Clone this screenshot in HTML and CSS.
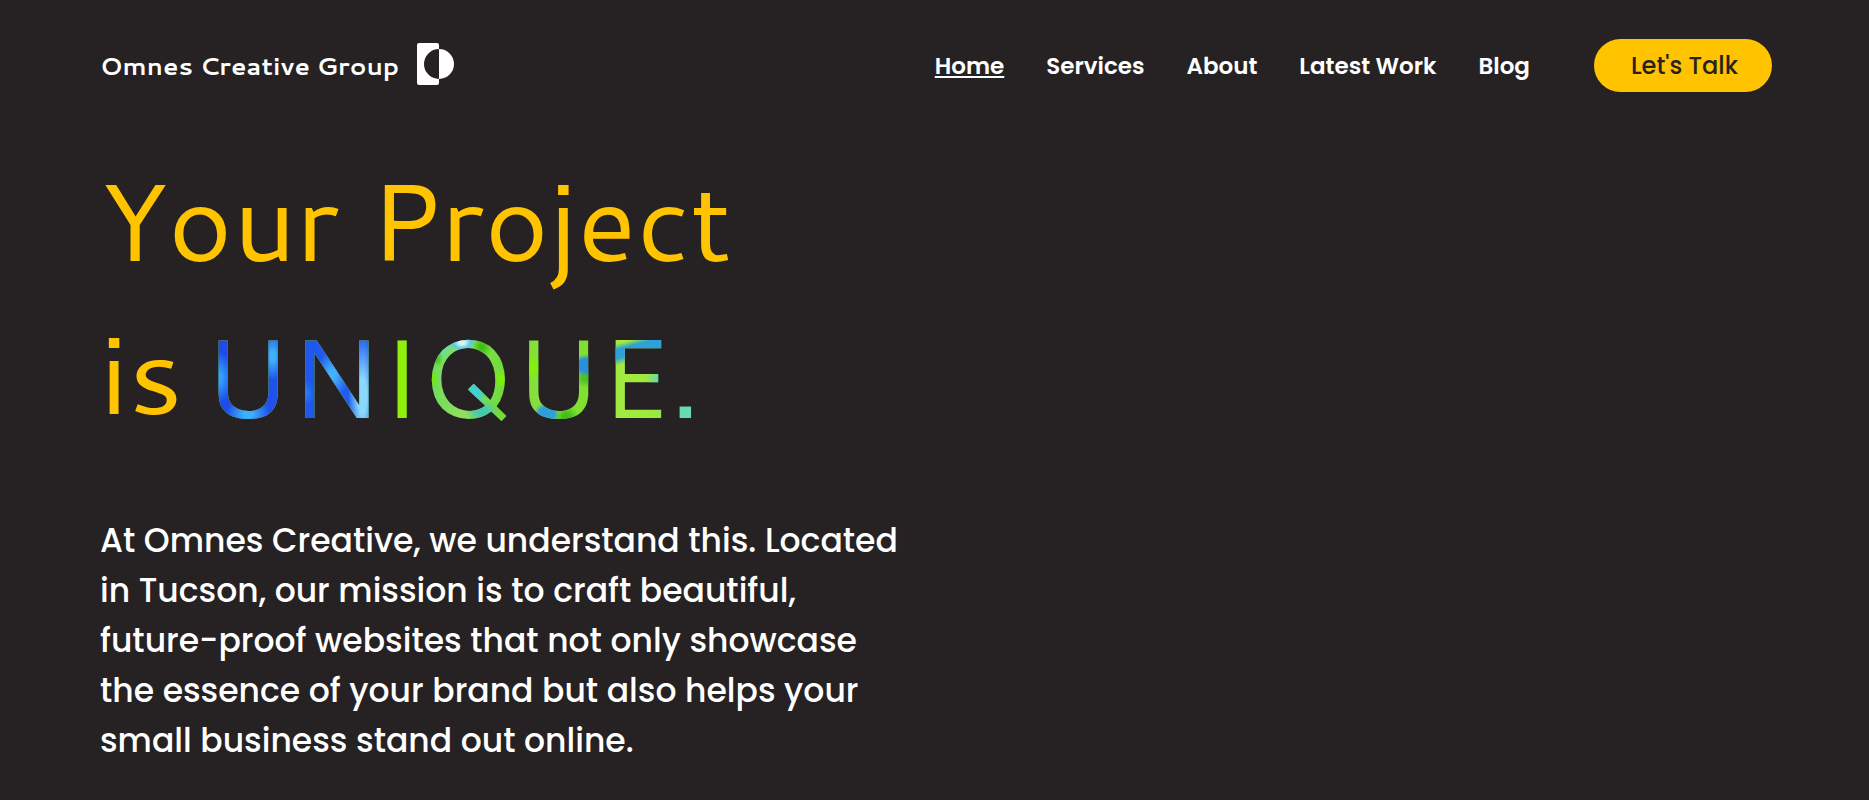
FILE: index.html
```html
<!DOCTYPE html>
<html lang="en">
  <head>
    <meta charset="UTF-8" />
    <meta name="viewport" content="width=device-width, initial-scale=1.0" />
    <title>Omnes Creative Group</title>
    <link rel="stylesheet" href="styles.css" />
  </head>
  <body>
    <header class="header">
      <a href="#" class="logo">
        <span>Omnes Creative Group</span>
        <svg class="logo-icon" viewBox="0 0 37 42" aria-hidden="true">
          <path fill="#fff" d="M2 0H20Q22 0 22 2V6A15 15 0 0 0 22 36V40Q22 42 20 42H2Q0 42 0 40V2Q0 0 2 0Z" />
          <path fill="#fff" d="M22 6A15 15 0 0 1 22 36Z" />
        </svg>
      </a>

      <nav class="nav">
        <a href="#" class="active">Home</a>
        <a href="#">Services</a>
        <a href="#">About</a>
        <a href="#">Latest Work</a>
        <a href="#">Blog</a>
        <button type="button" class="talk-btn">Let's Talk</button>
      </nav>
    </header>

    <main class="hero">
      <h1>
        <span class="line">Your Project</span>
        <span class="line">is <span class="unique">UNIQUE.</span></span>
      </h1>
      <p>
        At Omnes Creative, we understand this. Located<br />
        in Tucson, our mission is to craft beautiful,<br />
        future-proof websites that not only showcase<br />
        the essence of your brand but also helps your<br />
        small business stand out online.
      </p>
    </main>
  </body>
</html>
```
FILE: styles.css
```css
* {
  box-sizing: border-box;
  margin: 0;
  padding: 0;
}

body {
  background: #262223;
  color: #fff;
  font-family: "Poppins", "Inter", sans-serif;
}

/* Header */
.header {
  display: flex;
  justify-content: space-between;
  align-items: center;
  padding: 39px 97px 0 100px;
}

.logo {
  display: flex;
  align-items: flex-start;
  gap: 18px;
  color: #fff;
  font-family: "Cantarell", "Open Sans", sans-serif;
  font-size: 25px;
  font-weight: 700;
  line-height: 45px;
  text-decoration: none;
}

.logo-icon {
  width: 37px;
  height: 42px;
}

.nav {
  display: flex;
  align-items: center;
  gap: 42px;
}

.nav a {
  color: #fff;
  font-size: 23px;
  font-weight: 600;
  line-height: 34px;
  text-decoration: none;
}

.nav a.active {
  text-decoration: underline;
  text-decoration-thickness: 2px;
  text-underline-offset: 2px;
}

.talk-btn {
  margin-left: 22px;
  padding: 0 34px 0 37px;
  border: none;
  border-radius: 27px;
  background: #ffc300;
  color: #262223;
  font-family: inherit;
  font-size: 24px;
  font-weight: 500;
  line-height: 53px;
  cursor: pointer;
}

/* Hero */
.hero {
  padding: 50px 100px;
}

.hero h1 {
  color: #ffc300;
  font-family: "Cantarell", "Open Sans", sans-serif;
  font-size: 110px;
  font-weight: 400;
  line-height: 153px;
}

.line {
  display: flex;
  gap: 20px;
}

/* Painted texture showing through the letters */
.unique {
  margin-top: 3px;
  font-size: 112px;
  background:
    /* blue part */
    radial-gradient(ellipse 16px 26px at 3% 52%, #35a2f8 20%, transparent),
    radial-gradient(ellipse 22px 18px at 9% 76%, #3fb0fa 20%, transparent),
    radial-gradient(ellipse 12px 24px at 14% 38%, #3fb0fa 20%, transparent),
    radial-gradient(ellipse 12px 14px at 20% 62%, #2a8df5, transparent),
    radial-gradient(ellipse 16px 24px at 26% 50%, #45b0fa 20%, transparent),
    radial-gradient(ellipse 14px 60px at 32% 64%, #8ad8fb 30%, transparent),
    /* green part */
    radial-gradient(ellipse 14px 10px at 52% 29%, #d8f3f5 20%, #5cc8e8 60%, transparent),
    radial-gradient(ellipse 10px 12px at 56% 32%, #3fbf18 20%, transparent),
    radial-gradient(ellipse 12px 16px at 48% 31%, #5fdcc0, transparent),
    radial-gradient(ellipse 6px 9px at 47% 39%, #4fc31a 30%, transparent),
    radial-gradient(ellipse 6px 9px at 46% 53%, #74e80c 30%, transparent),
    radial-gradient(ellipse 8px 10px at 60% 53%, #7ef00c 30%, transparent),
    radial-gradient(ellipse 18px 22px at 54% 58%, #3fd0d0 50%, transparent),
    radial-gradient(ellipse 16px 12px at 56% 74%, #45c8b0 30%, transparent),
    radial-gradient(ellipse 10px 14px at 66% 45%, #84f00c 30%, transparent),
    radial-gradient(ellipse 13px 12px at 69% 76%, #2f9fdc 60%, transparent),
    radial-gradient(ellipse 12px 12px at 73% 78%, #3fbf18 30%, transparent),
    radial-gradient(ellipse 14px 11px at 77% 44%, #2b8fe0 60%, transparent),
    radial-gradient(ellipse 14px 10px at 77% 52%, #4fbf28 30%, transparent),
    linear-gradient(165deg, transparent 28%, #2fa0d8 31%, #2fa0d8 36%, transparent 40%) 100% 0 / 20% 100% no-repeat,
    radial-gradient(ellipse 16px 10px at 92% 53%, #5fd8b8 20%, transparent),
    linear-gradient(90deg, #1d48e8 0, #2160f0 34%, transparent 34%),
    linear-gradient(90deg, #8ff00c 42%, #6fdc5a 46%, #90e060 52%, #6fdc3a 60%, #8be03c 68%, #7fdf30 78%, #a5ea40 84%, #9be83c 91%, #66dcae 95%);
  -webkit-background-clip: text;
  background-clip: text;
  color: transparent;
}

.hero p {
  margin-top: 65px;
  font-size: 33px;
  font-weight: 500;
  line-height: 50px;
}
```
